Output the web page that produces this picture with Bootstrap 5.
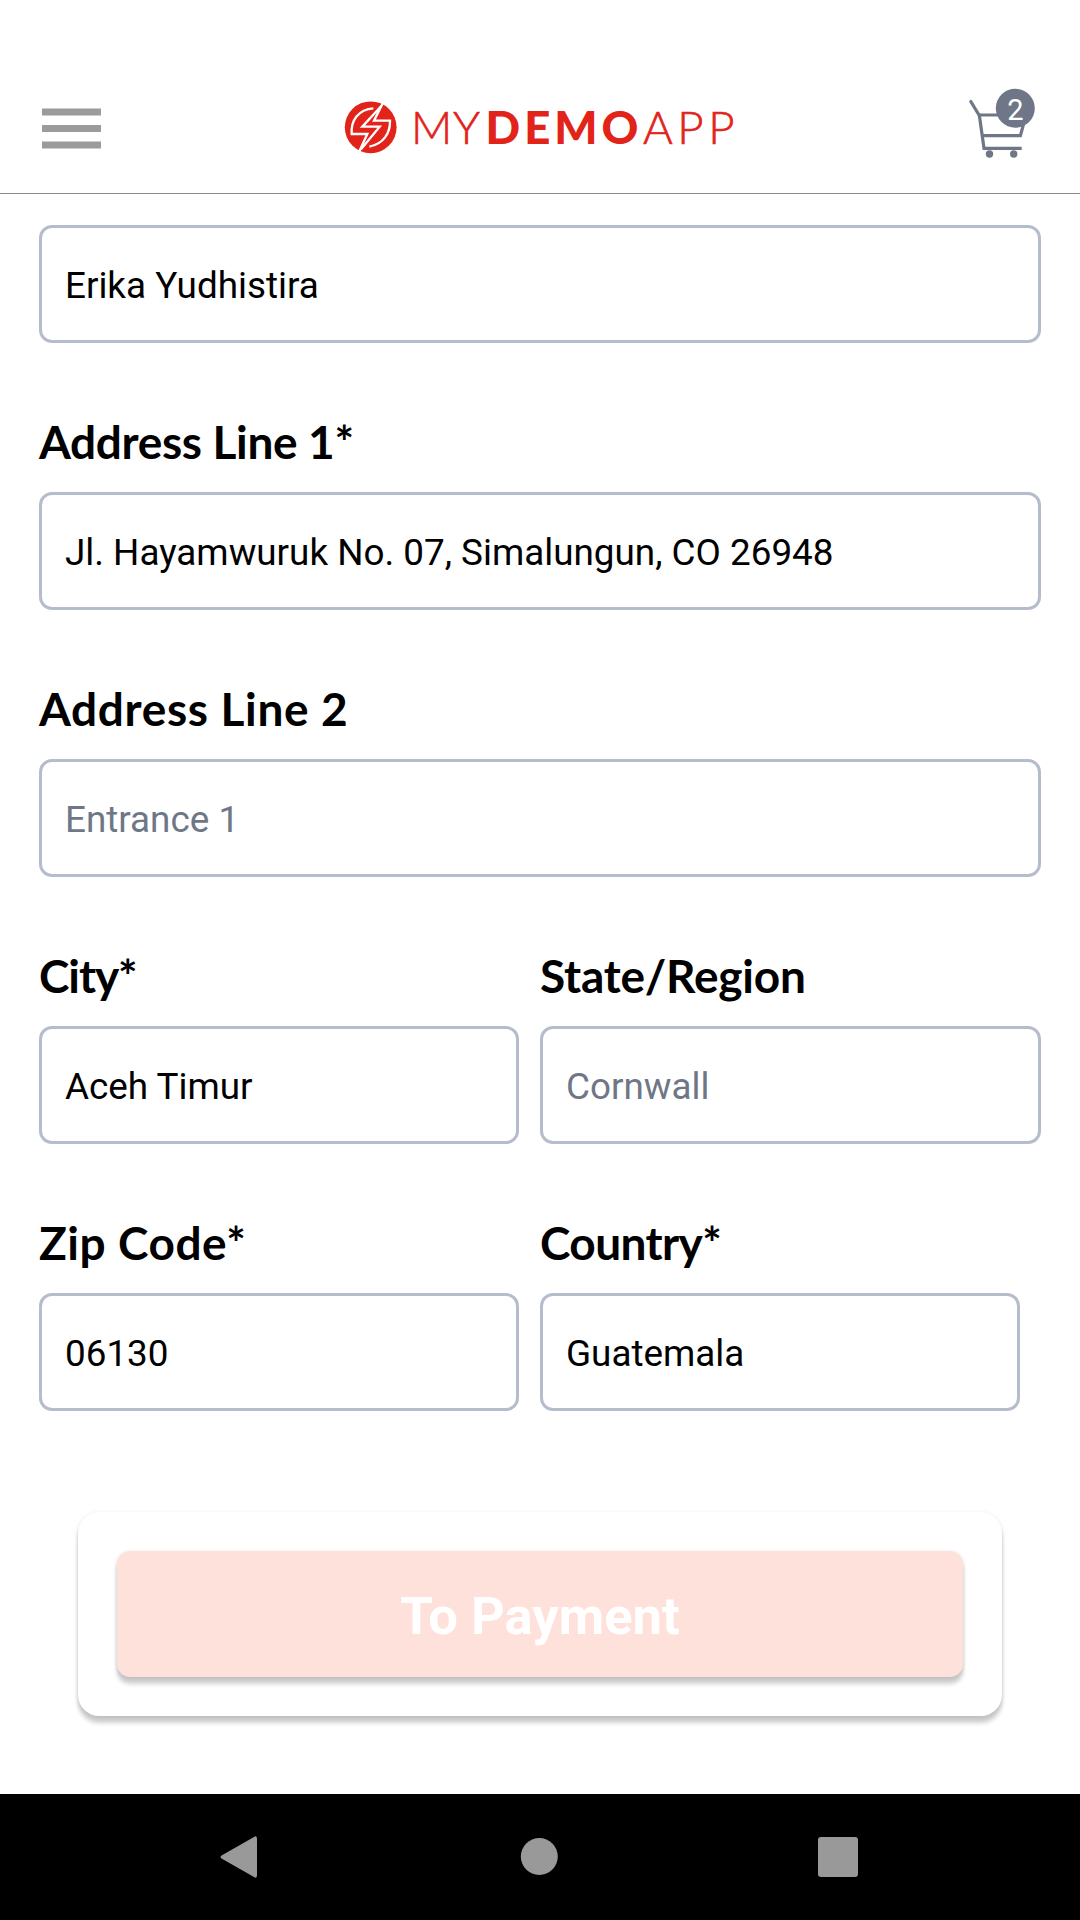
<!DOCTYPE html>
<html lang="en">
<head>
<meta charset="utf-8">
<meta name="viewport" content="width=device-width, initial-scale=1">
<title>My Demo App - Checkout</title>
<link href="https://cdn.jsdelivr.net/npm/bootstrap@5.3.0/dist/css/bootstrap.min.css" rel="stylesheet">
<style>
body{font-family:Roboto,sans-serif;background:#fff;color:#000}
.screen{width:1080px;height:1920px}
.app-header{height:194px;padding:60px 42px 0 42px;border-bottom:1px solid #8a8a8a}
.menu-icon{margin-top:3px}
.cart-icon{margin-bottom:7px}
.brand-logo{margin-left:10px}
.form-area{padding:31px 39px 0}
.form-control.field{height:118px;border:3px solid #b5bdcd;border-radius:13px;padding:2px 23px 0;font-size:36.85px;line-height:1.2;color:#000;background:#fff}
.field::placeholder{color:#6f7787;opacity:1}
.field-label{font-family:Lato,sans-serif;font-weight:700;font-size:46px;line-height:60px;margin:69px 0 20px;white-space:nowrap}
.ls-addr1{letter-spacing:-.35px}
.ls-addr2{letter-spacing:.65px}
.ls-city{letter-spacing:-1.1px}
.ls-state{letter-spacing:-.2px}
.ls-zip{letter-spacing:.55px}
.ls-country{letter-spacing:-.6px}
.col-left{width:480px}
.col-state{width:501px}
.pair{gap:21px}
.pay-card{margin:101px 39px 0;height:204px;padding:39px;border-radius:21px;background:#fff;box-shadow:0 7px 4px rgba(0,0,0,.19),0 1px 4px rgba(0,0,0,.12)}
.btn.pay-btn{height:126px;border:0;border-radius:13px;background:#fde1da;color:#fff;font-size:52.5px;font-weight:700;line-height:1;padding-top:10px;box-shadow:0 7px 4px rgba(0,0,0,.19),0 1px 4px rgba(0,0,0,.12)}
.sysbar{height:126px;background:#000}
svg{display:block}
</style>
</head>
<body>
<div class="screen d-flex flex-column overflow-hidden">
  <header class="app-header d-flex justify-content-between align-items-center flex-shrink-0">
    <svg class="menu-icon" width="60" height="41" viewBox="0 0 60 41" fill="#9b9b9b"><path d="M0 .5h59v7H0zM0 17h59v7H0zM0 33.500h59v7H0z"/></svg>
    <svg class="brand-logo" width="400" height="60" viewBox="340 97 400 60" fill="#e2231a">
      <circle cx="370.7" cy="127.3" r="25.9"/>
      <g transform="translate(330 80) scale(.33333)" fill="none" stroke="#fff" stroke-width="7">
        <path d="M159 68L132 122H180C181 160 160 192 118 200"/>
        <path d="M87 216L112 162H65C62 122 85 88 130 85"/>
        <path d="M154 78L97 140H149L93 208"/>
      </g>
      <g font-family="Lato" font-size="45.5">
        <text x="411" y="144" font-weight="300" stroke="#e2231a" stroke-width=".6" textLength="69">MY</text>
        <text x="485.5" y="144" font-weight="900" textLength="153">DEMO</text>
        <text x="643" y="144" font-weight="300" stroke="#e2231a" stroke-width=".6" textLength="91.500">APP</text>
      </g>
    </svg>
    <svg class="cart-icon" width="70" height="75" viewBox="968 86 70 75" fill="none" stroke="#6e7687" stroke-width="3.2">
      <path stroke-linecap="round" d="M970.8 101.500L979 115"/><path d="M978 115H1026L1020.400 135.700H982M979.300 115L984 148.300H1021.700"/>
      <g fill="#6e7687" stroke="none"><circle cx="989.5" cy="154" r="3.7"/><circle cx="1013.7" cy="154" r="3.7"/><circle cx="1015.3" cy="108.3" r="19.5"/></g>
      <text x="1015.3" y="119.500" text-anchor="middle" font-family="Roboto" font-size="29" fill="#fff" stroke="none">2</text>
    </svg>
  </header>
  <main class="form-area flex-grow-1">
    <input class="form-control field" value="Erika Yudhistira">
    <label class="field-label d-block ls-addr1">Address Line 1*</label>
    <input class="form-control field" value="Jl. Hayamwuruk No. 07, Simalungun, CO 26948">
    <label class="field-label d-block ls-addr2">Address Line 2</label>
    <input class="form-control field" placeholder="Entrance 1">
    <div class="d-flex pair">
      <div class="col-left"><label class="field-label d-block ls-city">City*</label><input class="form-control field" value="Aceh Timur"></div>
      <div class="col-state"><label class="field-label d-block ls-state">State/Region</label><input class="form-control field" placeholder="Cornwall"></div>
    </div>
    <div class="d-flex pair">
      <div class="col-left"><label class="field-label d-block ls-zip">Zip Code*</label><input class="form-control field" value="06130"></div>
      <div class="col-left"><label class="field-label d-block ls-country">Country*</label><input class="form-control field" value="Guatemala"></div>
    </div>
    <div class="pay-card">
      <button class="btn pay-btn w-100">To Payment</button>
    </div>
  </main>
  <footer class="sysbar flex-shrink-0 d-flex justify-content-center align-items-center">
    <svg width="640" height="44" viewBox="220 1835 640 44" fill="#999"><path d="M254 1837Q257 1835 257 1839V1875Q257 1879 254 1877L221.500 1858.500Q219.500 1857 221.500 1855.500Z"/><circle cx="539.3" cy="1856.500" r="18.500"/><rect x="818" y="1837" width="40" height="40" rx="3"/></svg>
  </footer>
</div>
<script src="https://cdn.jsdelivr.net/npm/bootstrap@5.3.0/dist/js/bootstrap.bundle.min.js"></script>
</body>
</html>
